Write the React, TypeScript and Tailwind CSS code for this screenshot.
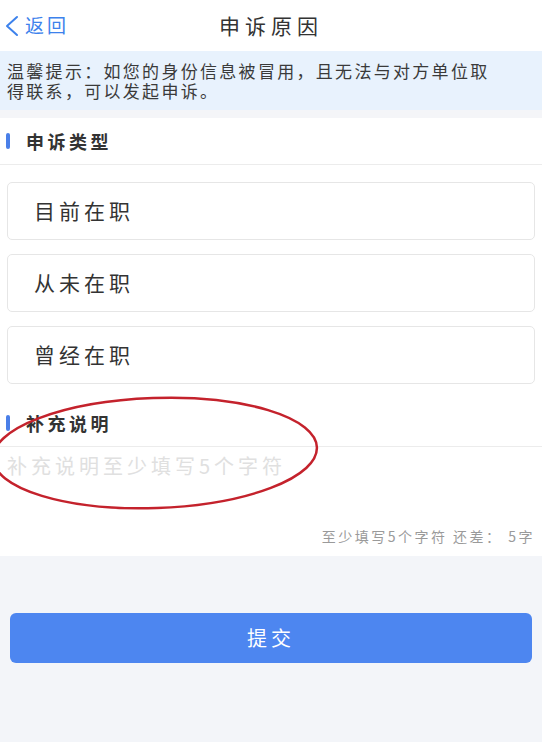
import React from "react";

const types = ["目前在职", "从未在职", "曾经在职"];

function SectionTitle({ text }: { text: string }) {
  return (
    <div className="flex h-[47px] items-center border-b border-[#ececec]">
      <span className="ml-[6px] h-[16px] w-[4px] rounded-full bg-[#4a7fe8]" />
      <span className="ml-[16px] text-[18px] font-bold tracking-[3.5px] text-[#333]">{text}</span>
    </div>
  );
}

export default function App() {
  return (
    <div
      className="relative min-h-[742px] w-full overflow-hidden bg-[#f3f5f9]"
      style={{ fontFamily: '"Noto Sans CJK SC", "Noto Sans", sans-serif' }}
    >
      {/* header */}
      <div className="relative flex h-[51px] items-center bg-white">
        <div className="flex items-center pl-[4px] text-[#3d82ec]">
          <svg width="16" height="22" viewBox="0 0 16 22" fill="none">
            <path d="M13 2 L3 11 L13 20" stroke="#3d82ec" strokeWidth="2" strokeLinecap="round" strokeLinejoin="round" />
          </svg>
          <span className="ml-[5px] text-[19px] tracking-[3px]">返回</span>
        </div>
        <div className="absolute left-0 right-0 text-center text-[21px] tracking-[5px] text-[#333]">申诉原因</div>
      </div>

      {/* tip */}
      <div className="bg-[#e8f2fd] pb-[9px] pl-[7px] pr-[40px] pt-[10px] text-[17px] leading-[20px] tracking-[2.3px] text-[#3a3a3a]">
        温馨提示：如您的身份信息被冒用，且无法与对方单位取得联系，可以发起申诉。
      </div>
      <div className="h-[8px] bg-[#f4f5f8]" />

      {/* form */}
      <div className="bg-white pb-[10px]">
        <SectionTitle text="申诉类型" />
        <div className="flex flex-col gap-[14px] px-[7px] pt-[17px]">
          {types.map((t) => (
            <div
              key={t}
              className="flex h-[58px] items-center rounded-[5px] border border-[#e6e6e6] pl-[26px] text-[21px] tracking-[4px] text-[#333]"
            >
              {t}
            </div>
          ))}
        </div>
        <div className="mt-[16px]">
          <SectionTitle text="补充说明" />
        </div>
        <div className="px-[7px] pt-[5px] text-[20px] leading-[28px] tracking-[4px] text-[#e0e0e0]">
          补充说明至少填写5个字符
        </div>
        <div className="mt-[46px] pr-[7px] text-right text-[14px] leading-[20px] tracking-[2.5px] text-[#9a9a9a]">
          至少填写5个字符 还差： 5字
        </div>
      </div>

      {/* submit */}
      <div className="px-[10px] pt-[57px]">
        <button className="flex h-[50px] w-full items-center justify-center rounded-[6px] bg-[#4d86f0] text-[20px] tracking-[4px] text-white">
          提交
        </button>
      </div>

      {/* red annotation ring */}
      <svg className="pointer-events-none absolute left-0 top-0" width="542" height="742">
        <ellipse cx="155" cy="453" rx="162" ry="55" fill="none" stroke="#c4222c" strokeWidth="2.5" transform="rotate(-2 155 453)" />
      </svg>
    </div>
  );
}
